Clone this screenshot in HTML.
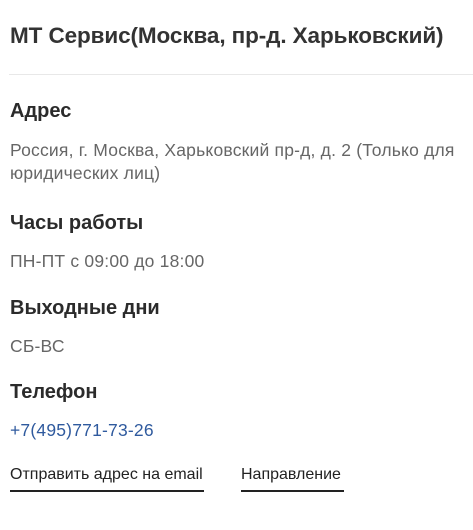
<!DOCTYPE html>
<html><head><meta charset="utf-8"><style>
body{margin:0;background:#fff;font-family:"Liberation Sans",sans-serif;width:473px;height:530px;overflow:hidden;position:relative}
div{position:absolute;left:10px;white-space:nowrap}
.t{font-size:22.5px;font-weight:bold;color:#333;top:23px;letter-spacing:-0.1px}
.h{font-size:20px;font-weight:bold;color:#2b2b2b;letter-spacing:0}
.p{font-size:17.5px;color:#666;letter-spacing:0.2px}
.hr{left:9px;right:0;top:74px;height:1px;background:#e8e8e8}
.a{font-size:16px;color:#222;top:466px;border-bottom:2px solid #222;padding-bottom:6px;letter-spacing:0}
</style></head><body>
<div class="t">МТ Сервис(Москва, пр-д. Харьковский)</div>
<div class="hr"></div>
<div class="h" style="top:100px">Адрес</div>
<div class="p" style="top:139px;line-height:23px">Россия, г. Москва, Харьковский пр-д, д. 2 (Только для<br>юридических лиц)</div>
<div class="h" style="top:212px">Часы работы</div>
<div class="p" style="top:251px">ПН-ПТ с 09:00 до 18:00</div>
<div class="h" style="top:297px">Выходные дни</div>
<div class="p" style="top:336px">СБ-ВС</div>
<div class="h" style="top:381px">Телефон</div>
<div class="p" style="top:420px;color:#2f5a9e;font-size:17.5px;letter-spacing:0.2px">+7(495)771-73-26</div>
<div class="a" style="width:194px">Отправить адрес на email</div>
<div class="a" style="left:241px;width:103px">Направление</div>
</body></html>
